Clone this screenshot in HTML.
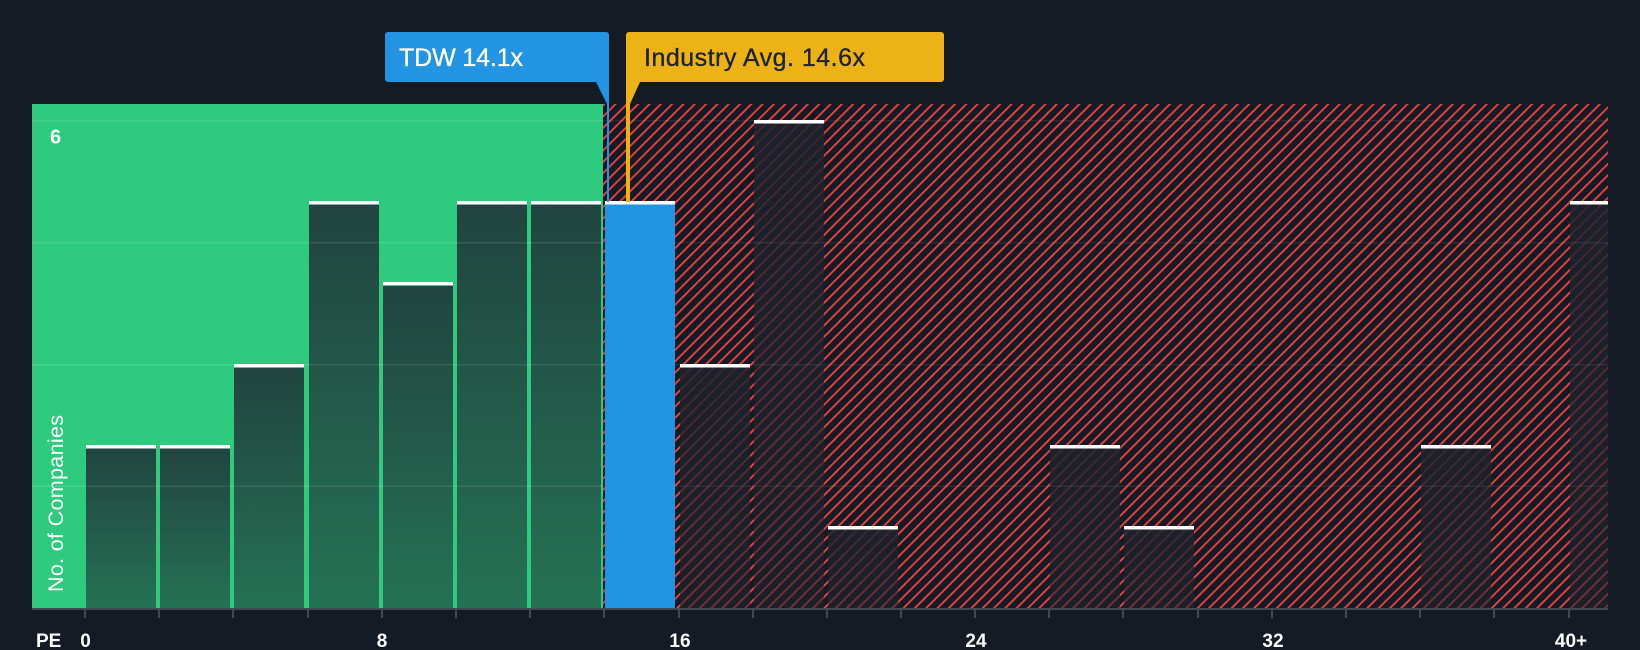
<!DOCTYPE html>
<html><head><meta charset="utf-8"><style>
html,body{margin:0;padding:0;background:#151b24;width:1640px;height:650px;overflow:hidden}
svg{display:block}
text{font-family:"Liberation Sans",sans-serif}
</style></head><body>
<svg width="1640" height="650" viewBox="0 0 1640 650" xmlns="http://www.w3.org/2000/svg">
<defs>
<pattern id="h" width="8" height="8" patternUnits="userSpaceOnUse" patternTransform="translate(603 104) rotate(45)">
<rect width="8" height="8" fill="#151b24"/><rect x="0" width="1.9" height="8" fill="#e64141"/>
</pattern>
<linearGradient id="g" x1="0" y1="0" x2="0" y2="1">
<stop offset="0" stop-color="rgb(30,40,50)" stop-opacity=".83"/><stop offset="1" stop-color="rgb(30,40,50)" stop-opacity=".55"/>
</linearGradient>
<linearGradient id="r" x1="0" y1="0" x2="0" y2="1">
<stop offset="0" stop-color="#1e222c" stop-opacity=".86"/><stop offset="1" stop-color="#1e222c" stop-opacity=".56"/>
</linearGradient>
</defs>
<rect width="1640" height="650" fill="#151b24"/>
<rect x="32" y="104" width="571" height="504" fill="#2ecb7f"/>
<rect x="603" y="104" width="1005" height="504" fill="url(#h)"/>
<g fill="url(#g)">
<rect x="86" y="446" width="70" height="162"/><rect x="160" y="446" width="70" height="162"/>
<rect x="234" y="365" width="70" height="243"/><rect x="309" y="202" width="70" height="406"/>
<rect x="383" y="283" width="70" height="325"/><rect x="457" y="202" width="70" height="406"/>
<rect x="531" y="202" width="70" height="406"/>
</g>
<g fill="url(#r)">
<rect x="680" y="365" width="70" height="243"/><rect x="754" y="121" width="70" height="487"/>
<rect x="828" y="527" width="70" height="81"/><rect x="1050" y="446" width="70" height="162"/>
<rect x="1124" y="527" width="70" height="81"/><rect x="1421" y="446" width="70" height="162"/>
<rect x="1570" y="202" width="38" height="406"/>
</g>
<g fill="#fff" fill-opacity=".1">
<rect x="32" y="120" width="571" height="1.5"/><rect x="32" y="242" width="571" height="1.5"/>
<rect x="32" y="364" width="571" height="1.5"/><rect x="32" y="485.500" width="571" height="1.5"/>
</g>
<g fill="#fff" fill-opacity=".07">
<rect x="603" y="120" width="1005" height="1.5"/><rect x="603" y="242" width="1005" height="1.5"/>
<rect x="603" y="364" width="1005" height="1.5"/><rect x="603" y="485.500" width="1005" height="1.5"/>
</g>
<rect x="605" y="202" width="70" height="406" fill="#2394e2"/>
<g fill="#fff">
<rect x="86" y="445" width="70" height="3.500"/><rect x="160" y="445" width="70" height="3.500"/>
<rect x="234" y="364" width="70" height="3.500"/><rect x="309" y="201" width="70" height="3.500"/>
<rect x="383" y="282" width="70" height="3.500"/><rect x="457" y="201" width="70" height="3.500"/>
<rect x="531" y="201" width="70" height="3.500"/><rect x="605" y="201" width="70" height="3.500"/>
<rect x="680" y="364" width="70" height="3.500"/><rect x="754" y="120" width="70" height="3.500"/>
<rect x="828" y="526" width="70" height="3.500"/><rect x="1050" y="445" width="70" height="3.500"/>
<rect x="1124" y="526" width="70" height="3.500"/><rect x="1421" y="445" width="70" height="3.500"/>
<rect x="1570" y="201" width="38" height="3.500"/>
</g>
<path d="M388 32H606a3 3 0 0 1 3 3V202H607V104L596 82H388a3 3 0 0 1-3-3V35a3 3 0 0 1 3-3Z" fill="#2394e2"/>
<path d="M629 32H941a3 3 0 0 1 3 3V79a3 3 0 0 1-3 3H640L630 104V202H626V35a3 3 0 0 1 3-3Z" fill="#edb316"/>
<text x="399" y="66" font-size="25" fill="#fff" stroke="#fff" stroke-width=".35" textLength="124">TDW 14.1x</text>
<text x="644" y="66" font-size="25" fill="#1d2430" stroke="#1d2430" stroke-width=".35" textLength="221">Industry Avg. 14.6x</text>
<rect x="32" y="608" width="1576" height="2" fill="#434750"/>
<g fill="#434750">
<rect x="84" y="608" width="2" height="10"/><rect x="158" y="608" width="2" height="10"/><rect x="232" y="608" width="2" height="10"/>
<rect x="307" y="608" width="2" height="10"/><rect x="381" y="608" width="2" height="10"/><rect x="455" y="608" width="2" height="10"/>
<rect x="529" y="608" width="2" height="10"/><rect x="603" y="608" width="2" height="10"/><rect x="678" y="608" width="2" height="10"/>
<rect x="752" y="608" width="2" height="10"/><rect x="826" y="608" width="2" height="10"/><rect x="900" y="608" width="2" height="10"/>
<rect x="974" y="608" width="2" height="10"/><rect x="1048" y="608" width="2" height="10"/><rect x="1122" y="608" width="2" height="10"/>
<rect x="1197" y="608" width="2" height="10"/><rect x="1271" y="608" width="2" height="10"/><rect x="1345" y="608" width="2" height="10"/>
<rect x="1419" y="608" width="2" height="10"/><rect x="1493" y="608" width="2" height="10"/><rect x="1568" y="608" width="2" height="10"/>
</g>
<g font-size="19" font-weight="bold" fill="#fff">
<text x="50" y="143.500" font-size="20">6</text>
<text x="36" y="647">PE</text>
<text x="85.500" y="647" text-anchor="middle">0</text>
<text x="382" y="647" text-anchor="middle">8</text>
<text x="680" y="647" text-anchor="middle">16</text>
<text x="976" y="647" text-anchor="middle">24</text>
<text x="1273" y="647" text-anchor="middle">32</text>
<text x="1571" y="647" text-anchor="middle">40+</text>
</g>
<text transform="translate(63 592) rotate(-90)" font-size="21.500" fill="#fff" textLength="177">No. of Companies</text>
</svg>
</body></html>
